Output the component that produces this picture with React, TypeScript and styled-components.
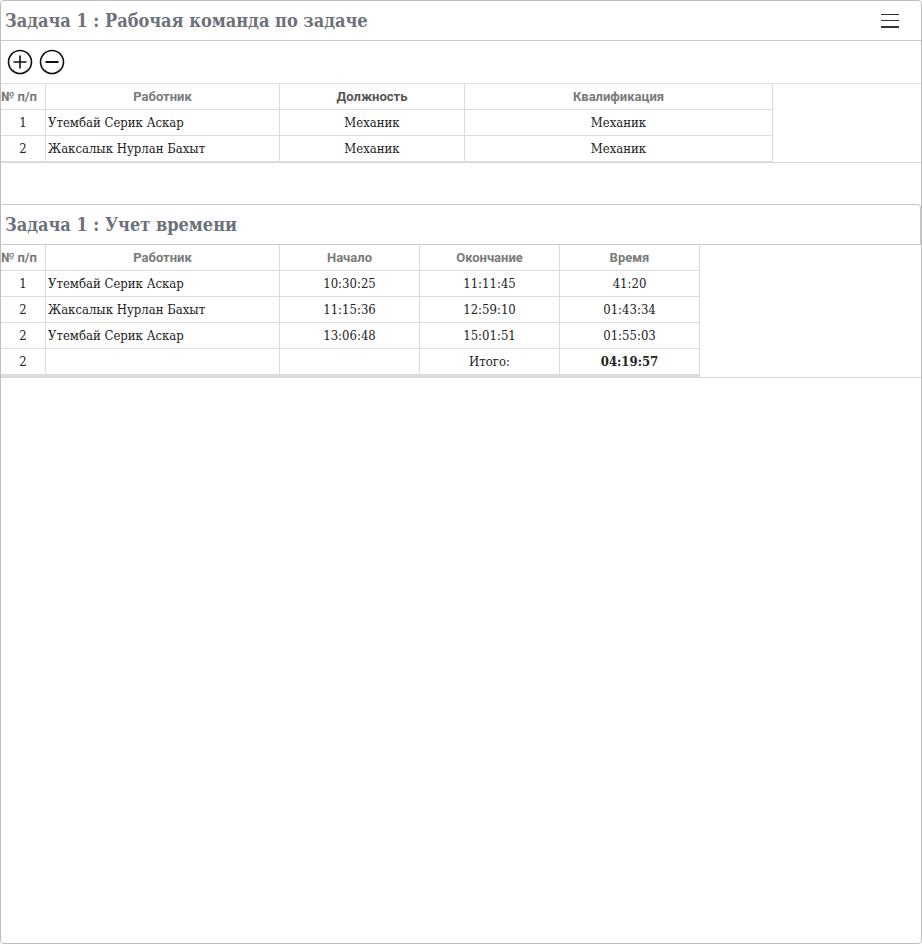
import React from 'react';
import styled, { createGlobalStyle } from 'styled-components';

const GlobalStyle = createGlobalStyle`
   html, body {
      margin: 0;
      padding: 0;
      background: #fff;
   }
   body {
      font-family: "DejaVu Serif Condensed", "DejaVu Serif", serif;
   }
`;

const Page = styled.div`
   box-sizing: border-box;
   width: 922px;
   height: 944px;
   border: 1px solid #bdbdbd;
   border-radius: 4px;
   overflow: hidden;
   display: flex;
   flex-direction: column;
`;

const Card = styled.section<{ $gapAfter?: number }>`
   display: flex;
   flex-direction: column;
   margin-bottom: ${(p) => p.$gapAfter ?? 0}px;
`;

const CardHeader = styled.div<{ $height: number; $bordered?: boolean }>`
   box-sizing: border-box;
   height: ${(p) => p.$height}px;
   display: flex;
   align-items: center;
   justify-content: space-between;
   padding: 0 22px 0 4px;
   border-bottom: 1px solid #c8c8c8;
   ${(p) => p.$bordered && `
      border-top: 1px solid #c8c8c8;
      border-right: 1px solid #c8c8c8;
      border-radius: 0 4px 0 0;
   `}
`;

const Title = styled.h2`
   margin: 0;
   font-family: "DejaVu Serif Condensed", "DejaVu Serif", serif;
   font-stretch: condensed;
   font-weight: bold;
   font-size: 18px;
   color: #6c717a;
`;

const MenuButton = styled.button`
   border: 0;
   background: none;
   width: 18px;
   height: 20px;
   display: flex;
   flex-direction: column;
   justify-content: space-between;
   padding: 3px 0;
   box-sizing: border-box;
   cursor: pointer;

   span {
      display: block;
      height: 1.5px;
      background: #333;
   }
`;

const Toolbar = styled.div`
   box-sizing: border-box;
   height: 43px;
   display: flex;
   align-items: center;
   gap: 6px;
   padding: 0 6px;
   border-bottom: 1px solid #dcdcdc;
`;

const IconButton = styled.button`
   border: 0;
   background: none;
   padding: 0;
   width: 26px;
   height: 26px;
   display: flex;
   cursor: pointer;
`;

const Table = styled.table<{ $bottom?: string }>`
   border-collapse: collapse;
   table-layout: fixed;
   border-bottom: ${(p) => p.$bottom ?? 'none'};
`;

const Th = styled.th<{ $w: number; $dark?: boolean }>`
   width: ${(p) => p.$w}px;
   height: 25px;
   padding: 0;
   border: 1px solid #dcdcdc;
   border-top: none;
   font-family: Roboto, "Liberation Sans", sans-serif;
   font-weight: bold;
   font-size: 13px;
   color: ${(p) => (p.$dark ? '#555' : '#7a7a7a')};
   text-align: center;
   white-space: nowrap;
   &:first-child { border-left: none; text-align: left; }
`;

const Td = styled.td<{ $left?: boolean; $bold?: boolean }>`
   height: 25px;
   padding: 0 2px;
   border: 1px solid #dcdcdc;
   font-family: "DejaVu Serif Condensed", "DejaVu Serif", serif;
   font-stretch: condensed;
   font-size: 13px;
   font-weight: ${(p) => (p.$bold ? 'bold' : 'normal')};
   color: #222;
   text-align: ${(p) => (p.$left ? 'left' : 'center')};
   white-space: nowrap;
   &:first-child { border-left: none; }
`;

const TableRow = styled.div`
   border-bottom: 1px solid #d6d6d6;
`;

const PlusIcon = () => (
   <svg width="26" height="26" viewBox="0 0 26 26" fill="none" stroke="#111" strokeWidth="1.6">
      <circle cx="13" cy="13" r="11.5" />
      <path d="M13 6.5v13M6.5 13h13" />
   </svg>
);

const MinusIcon = () => (
   <svg width="26" height="26" viewBox="0 0 26 26" fill="none" stroke="#111" strokeWidth="1.6">
      <circle cx="13" cy="13" r="11.5" />
      <path d="M6.5 13h13" strokeWidth="2.2" />
   </svg>
);

const team = [
   { n: 1, name: 'Утембай Серик Аскар', post: 'Механик', qual: 'Механик' },
   { n: 2, name: 'Жаксалык Нурлан Бахыт', post: 'Механик', qual: 'Механик' },
];

const times = [
   { n: 1, name: 'Утембай Серик Аскар', start: '10:30:25', end: '11:11:45', time: '41:20' },
   { n: 2, name: 'Жаксалык Нурлан Бахыт', start: '11:15:36', end: '12:59:10', time: '01:43:34' },
   { n: 2, name: 'Утембай Серик Аскар', start: '13:06:48', end: '15:01:51', time: '01:55:03' },
];

export default function App() {
   return (
      <>
         <GlobalStyle />
         <Page>
            <Card $gapAfter={41}>
               <CardHeader $height={40}>
                  <Title>Задача 1 : Рабочая команда по задаче</Title>
                  <MenuButton aria-label="menu">
                     <span />
                     <span />
                     <span />
                  </MenuButton>
               </CardHeader>
               <Toolbar>
                  <IconButton aria-label="add"><PlusIcon /></IconButton>
                  <IconButton aria-label="remove"><MinusIcon /></IconButton>
               </Toolbar>
               <TableRow>
                  <Table>
                     <thead>
                        <tr>
                           <Th $w={44}>№ п/п</Th>
                           <Th $w={233}>Работник</Th>
                           <Th $w={184} $dark>Должность</Th>
                           <Th $w={307}>Квалификация</Th>
                        </tr>
                     </thead>
                     <tbody>
                        {team.map((r) => (
                           <tr key={r.n}>
                              <Td>{r.n}</Td>
                              <Td $left>{r.name}</Td>
                              <Td>{r.post}</Td>
                              <Td>{r.qual}</Td>
                           </tr>
                        ))}
                     </tbody>
                  </Table>
               </TableRow>
            </Card>
            <Card>
               <CardHeader $height={41} $bordered>
                  <Title>Задача 1 : Учет времени</Title>
               </CardHeader>
               <TableRow>
                  <Table $bottom="3px solid #dcdcdc">
                     <thead>
                        <tr>
                           <Th $w={44}>№ п/п</Th>
                           <Th $w={233}>Работник</Th>
                           <Th $w={139}>Начало</Th>
                           <Th $w={139}>Окончание</Th>
                           <Th $w={139}>Время</Th>
                        </tr>
                     </thead>
                     <tbody>
                        {times.map((r, i) => (
                           <tr key={i}>
                              <Td>{r.n}</Td>
                              <Td $left>{r.name}</Td>
                              <Td>{r.start}</Td>
                              <Td>{r.end}</Td>
                              <Td>{r.time}</Td>
                           </tr>
                        ))}
                        <tr>
                           <Td>2</Td>
                           <Td $left />
                           <Td />
                           <Td>Итого:</Td>
                           <Td $bold>04:19:57</Td>
                        </tr>
                     </tbody>
                  </Table>
               </TableRow>
            </Card>
         </Page>
      </>
   );
}
